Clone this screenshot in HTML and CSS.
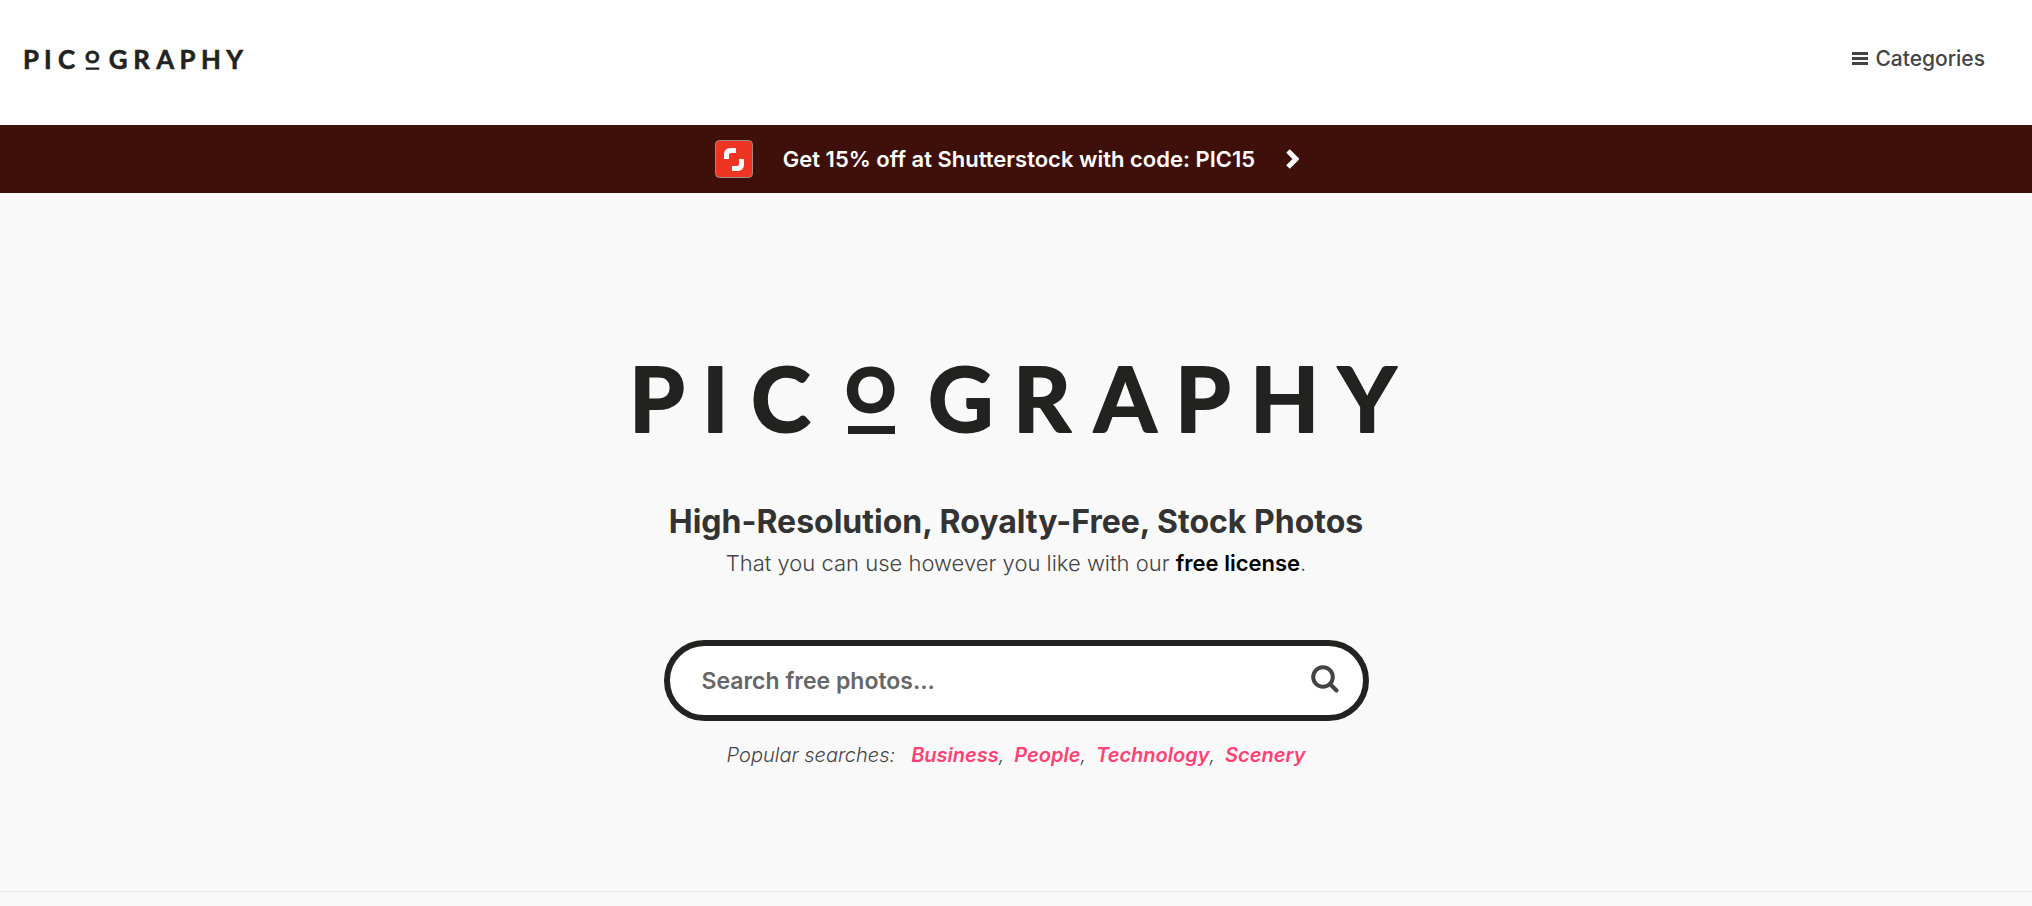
FILE: index.html
```html
<!DOCTYPE html>
<html lang="en">
<head>
	<meta charset="UTF-8">
	<meta name="viewport" content="width=device-width, initial-scale=1">
	<title>Picography</title>
	<link rel="stylesheet" href="styles.css">
</head>
<body>
	<header class="header">
		<a class="brand" href="#">
			<svg class="logo" viewBox="0 0 760 70">
				<text y="67" x="-7 66 115">PIC</text>
				<text class="small-o" y="47" x="210">O</text>
				<rect x="212" y="61" width="47" height="8"/>
				<text y="67" x="292 377 458 539 614 702">GRAPHY</text>
			</svg>
		</a>
		<nav>
			<a class="categories" href="#">
				<svg class="bars" viewBox="0 0 16 14"><path d="M0 0h16v3H0zM0 5h16v3H0zM0 10h16v3H0z"/></svg>
				Categories
			</a>
		</nav>
	</header>
	<a class="promo" href="#">
		<svg class="promo-icon" viewBox="0 0 38 38">
			<rect class="tile" x="0.5" y="0.5" width="37" height="37" rx="4"/>
			<path d="M21 8v5h-5a2 2 0 0 0-2 2v4H9v-5a6 6 0 0 1 6-6z"/>
			<path d="M17 31v-5h5a2 2 0 0 0 2-2v-5h5v6a6 6 0 0 1-6 6z"/>
		</svg>
		<span>Get 15% off at Shutterstock with code: PIC15</span>
		<svg class="promo-arrow" viewBox="0 0 14 20"><path d="M3 2l8 8-8 8"/></svg>
	</a>
	<main class="hero">
		<svg class="logo logo-big" viewBox="0 0 760 70">
			<text y="67" x="-7 66 115">PIC</text>
			<text class="small-o" y="47" x="210">O</text>
			<rect x="212" y="61" width="47" height="8"/>
			<text y="67" x="292 377 458 539 614 702">GRAPHY</text>
		</svg>
		<h1>High-Resolution, Royalty-Free, Stock Photos</h1>
		<p class="lead">That you can use however you like with our <a href="#">free license</a>.</p>
		<form class="search">
			<input type="text" placeholder="Search free photos..." aria-label="Search free photos">
			<button type="submit" aria-label="Search">
				<svg viewBox="0 0 28 28"><circle cx="12" cy="12" r="9.8"/><path d="M19 19l6.5 6.5"/></svg>
			</button>
		</form>
		<p class="popular">
			<span class="label">Popular searches:</span>
			<span><a href="#">Business</a>,</span>
			<span><a href="#">People</a>,</span>
			<span><a href="#">Technology</a>,</span>
			<a href="#">Scenery</a>
		</p>
	</main>
</body>
</html>
```
FILE: styles.css
```css
* {
	box-sizing: border-box;
}
body {
	margin: 0;
	background: #f9f9f9;
	color: #444;
	font-family: Inter, "Open Sans", sans-serif;
}
a {
	text-decoration: none;
}
h1, p {
	margin: 0;
}

/* header */
.header {
	display: flex;
	align-items: center;
	justify-content: space-between;
	height: 125px;
	padding: 0 47px 8px 25px;
	background: #fff;
}
.brand {
	display: block;
	padding-top: 3px;
}
.logo {
	display: block;
	width: 218px;
	overflow: visible;
	fill: #222220;
}
.logo text {
	font: 700 90px Lato, sans-serif;
	stroke: #222220;
	stroke-width: 2;
	stroke-linejoin: round;
}
.logo .small-o {
	font-size: 61px;
	stroke-width: 3;
}
.categories {
	display: flex;
	align-items: center;
	gap: 7px;
	color: #444;
	font-size: 21px;
	font-weight: 500;
}
.bars {
	width: 16px;
	height: 14px;
	fill: #444;
}

/* promo bar */
.promo {
	display: flex;
	align-items: center;
	justify-content: center;
	gap: 30px;
	height: 68px;
	padding-right: 18px;
	background: #3f100a;
	color: #fff;
	font-size: 22px;
	font-weight: 600;
}
.promo-icon {
	width: 38px;
	height: 38px;
	fill: #fff;
}
.promo-icon .tile {
	fill: #ee3524;
	stroke: #a08a88;
}
.promo-arrow {
	width: 14px;
	height: 20px;
	fill: none;
	stroke: #fff;
	stroke-width: 5;
}

/* hero */
.hero {
	display: flex;
	flex-direction: column;
	align-items: center;
	padding: 172px 20px 121px;
	border-bottom: 1px solid #ebebeb;
}
.logo-big {
	width: 100%;
	max-width: 760px;
}
h1 {
	margin-top: 67px;
	color: #333;
	font-size: 32px;
	font-weight: 700;
	line-height: 40px;
	text-align: center;
}
.lead {
	margin-top: 5px;
	font-size: 22px;
	font-weight: 300;
	line-height: 32px;
}
.lead a {
	color: #000;
	font-weight: 600;
}
.search {
	display: flex;
	align-items: center;
	width: 100%;
	max-width: 705px;
	height: 81px;
	margin-top: 61px;
	padding: 0 24px 0 32px;
	background: #fff;
	border: 6px solid #222220;
	border-radius: 41px;
}
.search input {
	flex: 1;
	min-width: 0;
	padding: 0;
	border: 0;
	outline: 0;
	background: none;
	font: 600 23px Inter, sans-serif;
}
.search input::placeholder {
	color: #666;
}
.search button {
	padding: 0 0 4px;
	border: 0;
	background: none;
}
.search svg {
	display: block;
	width: 28px;
	height: 28px;
	fill: none;
	stroke: #444;
	stroke-width: 4;
	stroke-linecap: round;
}
.popular {
	display: flex;
	flex-wrap: wrap;
	gap: 10px;
	margin-top: 19px;
	font-size: 20px;
	font-style: italic;
	font-weight: 300;
	line-height: 30px;
}
.popular .label {
	margin-right: 6px;
}
.popular a {
	color: #ff4274;
	font-weight: 600;
}
```
